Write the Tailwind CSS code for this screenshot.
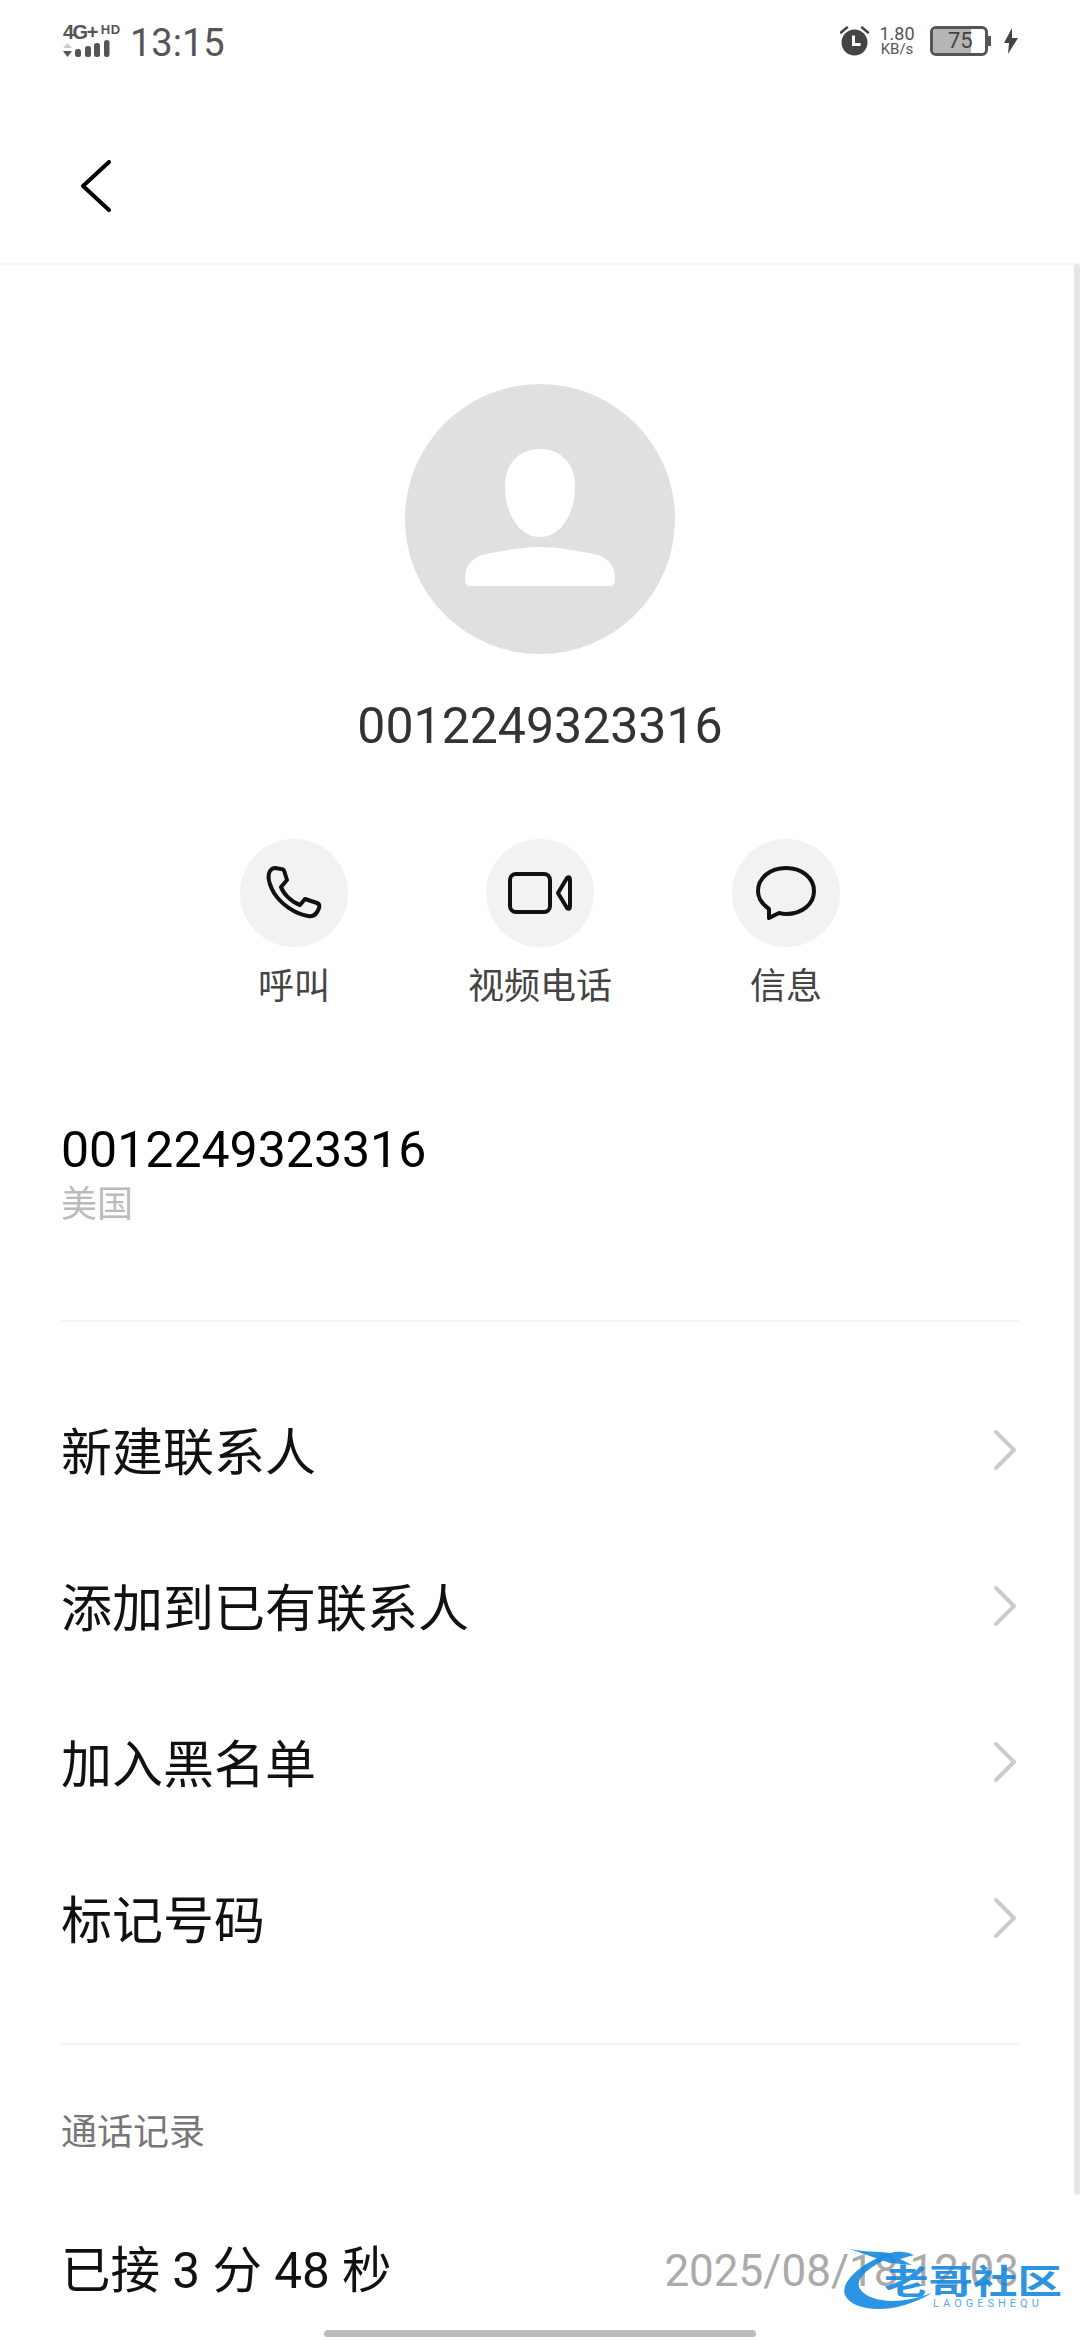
<!DOCTYPE html>
<html lang="zh">
<head>
  <meta charset="UTF-8">
  <meta name="viewport" content="width=device-width, initial-scale=1.0">
  <title>0012249323316</title>
  <script src="https://cdn.jsdelivr.net/npm/@tailwindcss/browser@4"></script>
</head>
<body class="bg-white font-['Roboto','Noto_Sans_CJK_SC',sans-serif]">
<div class="relative w-[1080px] h-[2340px] overflow-hidden bg-white">

  <!-- Status bar -->
  <div class="h-[82px] pl-[63px] pr-[62px] flex items-center justify-between text-[#555]">
    <div class="flex items-center gap-[9px]">
      <div class="w-[58px] h-[32px] flex flex-col justify-between">
        <div class="flex items-start font-bold font-['Liberation_Sans'] whitespace-nowrap">
          <span class="text-[20px] leading-[15px] tracking-[-1.500px]">4G+</span>
          <span class="text-[13px] leading-[10px] tracking-[0.500px] ml-[4px]">HD</span>
        </div>
        <svg width="48" height="17" viewBox="0 0 48 17" fill="#555">
          <path d="M0 8l4.500-5 4.500 5z" fill="#ccc"/><path d="M0 11l4.500 6 4.500-6z"/>
          <rect x="12" y="9" width="6" height="8" rx="2.500"/><rect x="22" y="6" width="6" height="11" rx="2.500"/><rect x="31" y="3" width="6" height="14" rx="2.500"/><rect x="41" y="0" width="5.500" height="17" rx="2.500"/>
        </svg>
      </div>
      <span class="mt-[3px] text-[38px] leading-[40px]">13:15</span>
    </div>
    <div class="flex items-center">
      <svg width="30" height="30" viewBox="0 0 30 30" fill="#444">
        <circle cx="14.500" cy="16.500" r="13"/>
        <path d="M1 6.500l6-5M28 6.500l-6-5" stroke="#444" stroke-width="2.500" stroke-linecap="round"/>
        <path d="M13.500 9.500v9h7" fill="none" stroke="#fff" stroke-width="3"/>
      </svg>
      <div class="ml-[9px] w-[36px] flex flex-col items-center text-[#555]">
        <span class="text-[18px] leading-[17px]">1.80</span>
        <span class="text-[15px] leading-[15px]">KB/s</span>
      </div>
      <div class="ml-[15px] w-[58px] h-[30px] border-[3px] border-[#555] rounded-[6px] relative overflow-hidden">
        <div class="absolute left-0 top-0 bottom-0 w-[38px] bg-[#b5b5b5]"></div>
        <span class="absolute left-[15px] top-0 text-[22px] leading-[24px] text-[#444]">75</span>
      </div>
      <div class="w-[3px] h-[10px] bg-[#555]"></div>
      <svg class="ml-[13px]" width="14" height="26" viewBox="0 0 14 26" fill="#444"><path d="M8 0L0 15h5l-1 11 10-16H8z"/></svg>
    </div>
  </div>

  <!-- Toolbar -->
  <div class="h-[183px] border-b-2 border-[#f7f7f7] pl-[80px] pt-[78px]">
    <svg width="32" height="52" viewBox="0 0 32 52" fill="none" stroke="#000" stroke-width="4" stroke-linecap="round" stroke-linejoin="round"><path d="M29 2L3 26l26 24"/></svg>
  </div>

  <!-- Avatar + name -->
  <div class="flex flex-col items-center pt-[119px]">
    <div class="w-[270px] h-[270px] rounded-full bg-[#e0e0e0] flex items-center justify-center">
      <svg width="150" height="140" viewBox="0 0 150 140" fill="#fff">
        <path d="M75 0c-20 0-35 13-35 38 0 26 14 50 35 50s35-24 35-50C110 13 95 0 75 0z"/>
        <path d="M75 98c-18 0-30 3-50 6C8 107 0 116 0 128c0 7 1 9 6 9h138c5 0 6-2 6-9 0-12-8-21-25-24-20-3-32-6-50-6z"/>
      </svg>
    </div>
    <div class="mt-[42px] text-[50px] leading-[60px] text-[#333]">0012249323316</div>
  </div>

  <!-- Actions -->
  <div class="mt-[83px] grid grid-cols-3 w-[738px] mx-auto">
    <div class="flex flex-col items-center">
      <div class="w-[108px] h-[108px] rounded-full bg-[#f2f2f2] flex items-center justify-center">
        <svg width="56" height="54" viewBox="-1 0 56 54" fill="none" stroke="#111" stroke-width="4" stroke-linejoin="round"><path d="M8 2L14 3Q17 3 17.500 6L20 14L14 21C16 27 24 36 33 39L38 33L50 37Q53 38 52 42C50 48 46 51 41 50C28 48 14 38 7 27C2 18 0 10 3 5Q5 2 8 2Z"/></svg>
      </div>
      <span class="mt-[18px] text-[36px] leading-[44px] text-[#444]">呼叫</span>
    </div>
    <div class="flex flex-col items-center">
      <div class="w-[108px] h-[108px] rounded-full bg-[#f2f2f2] flex items-center justify-center">
        <svg width="64" height="42" viewBox="0 0 64 42" fill="none" stroke="#111" stroke-width="4" stroke-linejoin="round"><rect x="2" y="2" width="40" height="38" rx="6"/><path d="M50 21L59 6Q62 4 62 8V34Q62 38 59 36Z"/></svg>
      </div>
      <span class="mt-[18px] text-[36px] leading-[44px] text-[#444]">视频电话</span>
    </div>
    <div class="flex flex-col items-center">
      <div class="w-[108px] h-[108px] rounded-full bg-[#f2f2f2] flex items-center justify-center">
        <svg width="60" height="54" viewBox="0 0 60 54" fill="none" stroke="#111" stroke-width="4" stroke-linejoin="round"><path d="M30 2C46 2 58 12 58 25C58 38 46 48 30 48C27 48 25 47.500 23 47L13 52L13 43C6 38 2 32 2 25C2 12 14 2 30 2Z"/></svg>
      </div>
      <span class="mt-[18px] text-[36px] leading-[44px] text-[#444]">信息</span>
    </div>
  </div>

  <!-- Number -->
  <div class="mx-[61px] mt-[111px] pb-[93px] border-b-2 border-[#f5f5f5]">
    <div class="text-[50px] leading-[60px] text-black">0012249323316</div>
    <div class="mt-[3px] text-[36px] leading-[44px] text-[#bbb]">美国</div>
  </div>

  <!-- Menu -->
  <div class="ml-[61px] mr-[61px] mt-[51px]">
    <div class="h-[156px] flex items-center justify-between text-[51px] text-[#111]"><span class="mt-[6px]">新建联系人</span>
      <svg class="mr-[2px] -mt-[2px]" width="24" height="42" viewBox="0 0 24 42" fill="none" stroke="#ccc" stroke-width="4" stroke-linecap="round" stroke-linejoin="round"><path d="M3 3l18 18L3 39"/></svg></div>
    <div class="h-[156px] flex items-center justify-between text-[51px] text-[#111]"><span class="mt-[6px]">添加到已有联系人</span>
      <svg class="mr-[2px] -mt-[2px]" width="24" height="42" viewBox="0 0 24 42" fill="none" stroke="#ccc" stroke-width="4" stroke-linecap="round" stroke-linejoin="round"><path d="M3 3l18 18L3 39"/></svg></div>
    <div class="h-[156px] flex items-center justify-between text-[51px] text-[#111]"><span class="mt-[6px]">加入黑名单</span>
      <svg class="mr-[2px] -mt-[2px]" width="24" height="42" viewBox="0 0 24 42" fill="none" stroke="#ccc" stroke-width="4" stroke-linecap="round" stroke-linejoin="round"><path d="M3 3l18 18L3 39"/></svg></div>
    <div class="h-[156px] flex items-center justify-between text-[51px] text-[#111]"><span class="mt-[6px]">标记号码</span>
      <svg class="mr-[2px] -mt-[2px]" width="24" height="42" viewBox="0 0 24 42" fill="none" stroke="#ccc" stroke-width="4" stroke-linecap="round" stroke-linejoin="round"><path d="M3 3l18 18L3 39"/></svg></div>
  </div>

  <!-- Call log -->
  <div class="mx-[61px] mt-[46px] border-t-2 border-[#f5f5f5] pt-[66px]">
    <div class="text-[36px] leading-[44px] text-[#777]">通话记录</div>
    <div class="mt-[86px] flex items-center justify-between">
      <span class="text-[49.500px] leading-[60px] text-[#111]">已接 3 分 48 秒</span>
      <span class="text-[44px] leading-[60px] text-[#aaa]">2025/08/18 12:03</span>
    </div>
  </div>

  <!-- Scrollbar, home bar, watermark -->
  <div class="absolute right-0 top-[264px] h-[1931px] w-[6px] rounded-full bg-[#e6e6e6]"></div>
  <div class="absolute left-[324px] bottom-[3px] w-[432px] h-[7px] rounded-full bg-[#bbb]"></div>
  <svg class="absolute left-[840px] top-[2245px] opacity-90" width="100" height="72" viewBox="0 0 100 72" fill="#1589e0">
    <path d="M50 8C20 18 0 38 5 50C12 66 52 72 92 48C60 60 30 58 20 44C14 34 30 20 56 10Z"/>
    <path d="M4 2C20 8 40 6 50 8C60 5 70 8 74 10L60 14L72 20L50 18Z"/>
  </svg>
  <div class="absolute left-[883px] top-[2265px] w-[179px] h-[34px] flex items-center justify-center opacity-90">
    <span class="scale-x-[1.31] font-bold text-[34px] leading-[34px] whitespace-nowrap text-[#1589e0]">老哥社区</span>
  </div>
  <div class="absolute left-[933px] top-[2298px] text-[11px] leading-[11px] tracking-[4px] text-[#5aa9e8] whitespace-nowrap">LAOGESHEQU</div>
</div>
</body>
</html>
